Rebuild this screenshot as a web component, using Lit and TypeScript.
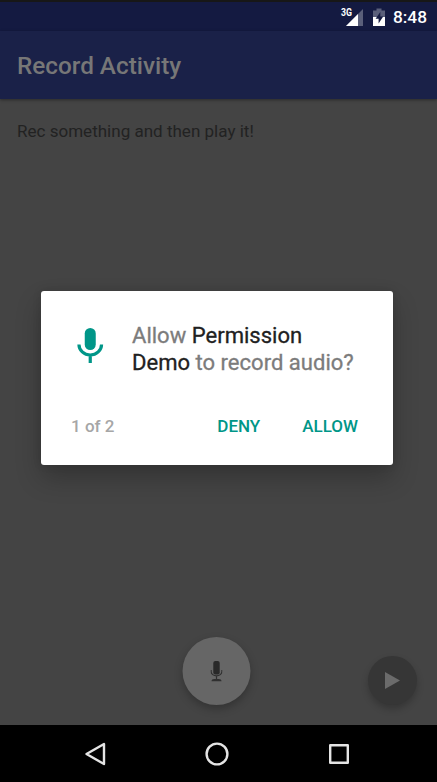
import { LitElement, html, css } from "lit";
import { customElement } from "lit/decorators.js";

@customElement("app-root")
export class AppRoot extends LitElement {
  static styles = css`
    :host {
      display: flex;
      flex-direction: column;
      position: relative;
      width: 437px;
      height: 782px;
      overflow: hidden;
      background: #444;
      font-family: Roboto, "Noto Sans", sans-serif;
      white-space: nowrap;
    }
    * { box-sizing: border-box; }
    svg { display: block; flex: none; }
    .status {
      height: 31px;
      flex: none;
      display: flex;
      align-items: center;
      justify-content: flex-end;
      padding: 1px 10px 0 0;
      background: #141a41;
      border-top: 2px solid #171717;
      color: #fff;
      font-size: 17.3px;
      font-weight: 500;
      line-height: 20px;
    }
    .signal { margin-right: 10px; }
    .battery { margin-right: 8px; }
    .net { font-size: 10px; font-weight: 700; fill: #fff; }
    .bar {
      height: 68px;
      flex: none;
      display: flex;
      align-items: center;
      padding: 0 0 0 17px;
      background: #1a2148;
      box-shadow: 0 1px 3px rgba(0, 0, 0, 0.4);
      color: #777;
      font-size: 24.3px;
      font-weight: 500;
    }
    .content {
      flex: 1;
      display: flex;
      flex-direction: column;
      padding: 22px 20px 20px 17px;
    }
    .hint { margin: 0; color: #222; font-size: 17.05px; line-height: 20px; }
    .actions {
      margin-top: auto;
      display: grid;
      grid-template-columns: 1fr 68px 1fr;
      margin-left: -2px;
      align-items: end;
    }
    .fab { border-radius: 50%; display: grid; place-items: center; }
    .rec {
      grid-column: 2;
      width: 68px;
      height: 68px;
      background: #666;
      box-shadow: 0 4px 8px rgba(0, 0, 0, 0.25);
      transform: translateX(0.5px);
    }
    .play {
      width: 49px;
      height: 49px;
      justify-self: end;
      background: #363636;
      box-shadow: 0 4px 7px rgba(0, 0, 0, 0.22);
    }
    .nav {
      height: 57px;
      flex: none;
      display: flex;
      justify-content: space-between;
      align-items: center;
      padding: 1px 86px 0 83px;
      background: #000;
    }
    .dialog {
      position: absolute;
      left: 41px;
      top: 291px;
      width: 352px;
      height: 174px;
      border-radius: 3px;
      background: #fff;
      box-shadow: 0 13px 26px rgba(0, 0, 0, 0.24), 0 0 8px rgba(0, 0, 0, 0.12);
      display: flex;
      flex-direction: column;
      justify-content: space-between;
      padding: 32px 35px 29px 30px;
    }
    .message { display: flex; gap: 28.5px; align-items: flex-start; }
    .icon { margin: 5px 0 0 6px; }
    .question {
      margin: 0;
      color: #7c7c7c;
      font-size: 22.05px;
      line-height: 26.5px;
      font-weight: 400;
      -webkit-text-stroke: 0.3px currentColor;
    }
    .app { color: #212121; }
    .footer { display: flex; align-items: center; font-size: 17px; line-height: 20px; font-weight: 500; }
    .count { color: #a6a6a6; margin-right: auto; }
    .button {
      border: 0;
      padding: 0;
      background: none;
      color: #009688;
      font: inherit;
    }
    .deny { margin-right: 42px; }
  `;

  render() {
    return html`
      <div class="status">
        <svg class="signal" width="23" height="20" viewBox="0 0 23 20">
          <path d="M23 2V19H6Z" fill="#fff" fill-opacity=".3" />
          <path d="M18 7V19H6Z" fill="#fff" />
          <text class="net" x="1" y="9" textLength="11" lengthAdjust="spacingAndGlyphs">3G</text>
        </svg>
        <svg class="battery" width="12" height="20" viewBox="0 0 12 20">
          <path d="M3.500 1.500h5v2H12V10H0V3.500h3.500Z" fill="#fff" fill-opacity=".3" />
          <path d="M0 10h12v9H0Z" fill="#fff" />
          <path d="M7.300 5 2.600 11.800h3V16.500l4.600-7H7.300Z" fill="#141a41" />
        </svg>
        <span class="time">8:48</span>
      </div>
      <div class="bar"><span class="title">Record Activity</span></div>
      <div class="content">
        <p class="hint">Rec something and then play it!</p>
        <div class="actions">
          <div class="fab rec">
            <svg width="12" height="21" viewBox="0 0 12 21">
              <rect x="2.800" y="0" width="6.400" height="13.500" rx="2" fill="#292929" />
              <path d="M.6 9v1.500a5.400 4.400 0 0 0 10.800 0V9M6 15v3" fill="none" stroke="#303030" stroke-width="1.200" />
              <path d="M1 20.200Q1 18 4 18h4q3 0 3 2.200Z" fill="#303030" />
            </svg>
          </div>
          <div class="fab play">
            <svg width="15" height="17" viewBox="0 0 15 17"><path d="M0 0 15 8.500 0 17Z" fill="#6b6b6b" /></svg>
          </div>
        </div>
      </div>
      <div class="nav">
        <svg width="24" height="24" viewBox="0 0 24 24"><path d="M3.500 12 21 2V22Z" fill="none" stroke="#e4e4e4" stroke-width="2.400" stroke-linejoin="round" /></svg>
        <svg width="24" height="24" viewBox="0 0 24 24"><circle cx="12" cy="12" r="10.400" fill="none" stroke="#e4e4e4" stroke-width="2.400" /></svg>
        <svg width="24" height="24" viewBox="0 0 24 24"><rect x="3.200" y="3.200" width="17.600" height="17.600" fill="none" stroke="#e4e4e4" stroke-width="2.400" stroke-linejoin="round" /></svg>
      </div>
      <div class="dialog">
        <div class="message">
          <svg class="icon" width="26.500" height="35" viewBox="-.25 0 26.500 35">
            <rect x="7.500" y="0" width="11" height="22" rx="5.500" fill="#009688" />
            <path d="M1.700 16.500a11.300 10.500 0 0 0 22.600 0M13 27v8" fill="none" stroke="#009688" stroke-width="3.200" />
          </svg>
          <p class="question">Allow <span class="app">Permission</span><br /><span class="app">Demo</span> to record audio?</p>
        </div>
        <div class="footer">
          <span class="count">1 of 2</span>
          <button class="button deny">DENY</button>
          <button class="button">ALLOW</button>
        </div>
      </div>
    `;
  }
}
